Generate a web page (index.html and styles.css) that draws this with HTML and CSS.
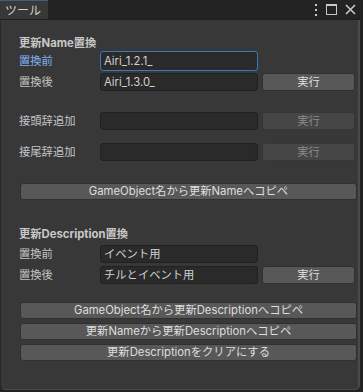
FILE: index.html
```html
<!DOCTYPE html>
<html lang="ja">
<head>
<meta charset="utf-8">
<link rel="stylesheet" href="styles.css">
</head>
<body>
<div class="window">
  <div class="tabbar">
    <div class="tab">ツール</div>
    <div class="tab-icons">
      <svg class="ic" width="4" height="12" viewBox="0 0 4 12"><rect x="1" y="0" width="2" height="2" fill="#c8c8c8"/><rect x="1" y="5" width="2" height="2" fill="#c8c8c8"/><rect x="1" y="10" width="2" height="2" fill="#c8c8c8"/></svg>
      <svg class="ic" width="11" height="11" viewBox="0 0 11 11"><rect x="0.5" y="0.5" width="10" height="10" fill="none" stroke="#c8c8c8" stroke-width="1"/><rect x="0" y="0" width="11" height="2" fill="#c8c8c8"/></svg>
      <svg class="ic" width="11" height="11" viewBox="0 0 11 11"><path d="M1 1 L10 10 M10 1 L1 10" stroke="#c8c8c8" stroke-width="1.6"/></svg>
    </div>
  </div>
  <div class="panel">
    <div class="content">
      <div class="heading">更新Name置換</div>
      <div class="row r1">
        <div class="label focus">置換前</div>
        <div class="field focused">Airi_1.2.1_</div>
      </div>
      <div class="row r2">
        <div class="label">置換後</div>
        <div class="field">Airi_1.3.0_</div>
        <div class="btn small">実行</div>
      </div>
      <div class="row r3">
        <div class="label">接頭辞追加</div>
        <div class="field"></div>
        <div class="btn small disabled">実行</div>
      </div>
      <div class="row r4">
        <div class="label">接尾辞追加</div>
        <div class="field"></div>
        <div class="btn small disabled">実行</div>
      </div>
      <div class="btn wide w1">GameObject名から更新Nameへコピペ</div>

      <div class="heading h2">更新Description置換</div>
      <div class="row r1">
        <div class="label">置換前</div>
        <div class="field">イベント用</div>
      </div>
      <div class="row r2">
        <div class="label">置換後</div>
        <div class="field">チルとイベント用</div>
        <div class="btn small">実行</div>
      </div>
      <div class="btn wide w2">GameObject名から更新Descriptionへコピペ</div>
      <div class="btn wide w3">更新Nameから更新Descriptionへコピペ</div>
      <div class="btn wide w3">更新Descriptionをクリアにする</div>
    </div>
  </div>
</div>
</body>
</html>
```
FILE: styles.css
```css
* { box-sizing: border-box; }
html, body {
  margin: 0;
  padding: 0;
  width: 363px;
  height: 392px;
  overflow: hidden;
  background: #232323;
  font-family: "Inter", "Noto Sans CJK JP", sans-serif;
  font-size: 11.3px;
  color: #c4c4c4;
}
.window {
  width: 360px;
  height: 390px;
  display: flex;
  flex-direction: column;
}
.tabbar {
  height: 20px;
  background: #232323;
  display: flex;
  align-items: stretch;
  justify-content: space-between;
  border-bottom: 1px solid #1e1e1e;
}
.tab {
  width: 48px;
  background: #383838;
  border-top: 1px solid #3f5f80;
  padding-left: 5px;
  line-height: 19px;
  color: #d0d0d0;
  font-size: 12px;
}
.tab-icons {
  display: flex;
  align-items: center;
  gap: 8px;
  padding-right: 4px;
}
.panel {
  flex: 1;
  background: #383838;
  border-right: 2px solid #4a4a4a;
  border-bottom: 1px solid #4a4a4a;
  border-left: 1px solid #2a2a2a;
  border-bottom-left-radius: 5px;
  border-bottom-right-radius: 5px;
}
.content {
  padding: 15px 2px 0 18px;
  display: flex;
  flex-direction: column;
}
.heading {
  height: 16px;
  line-height: 16px;
  font-weight: bold;
  color: #c8c8c8;
  margin-bottom: 1px;
}
.heading.h2 { margin-top: 26px; margin-bottom: 3px; }
.row {
  display: flex;
  align-items: center;
  height: 18px;
}
.row.r2 { margin-top: 3px; }
.row.r3 { margin-top: 21px; }
.row.r4 { margin-top: 13px; }
.label {
  width: 81px;
  line-height: 18px;
  color: #c4c4c4;
}
.label.focus { color: #7fb0f5; }
.field {
  width: 158px;
  height: 18px;
  background: #2a2a2a;
  border: 1px solid #212121;
  border-radius: 3px;
  padding-left: 3px;
  line-height: 16px;
  color: #d2d2d2;
}
.field.focused {
  border: 1px solid #3a79bb;
  height: 20px;
  line-height: 18px;
}
.btn {
  background: #585858;
  border: 1px solid #303030;
  border-radius: 3px;
  color: #dedede;
  text-align: center;
  line-height: 15px;
  height: 17px;
}
.btn.small {
  width: 93px;
  margin-left: 4px;
  height: 18px;
  line-height: 16px;
}
.btn.disabled {
  background: #464646;
  border-color: #363636;
  color: #8a8a8a;
}
.btn.wide {
  width: 337px;
  margin-left: 1px;
}
.btn.w1 { margin-top: 22px; }
.btn.w2 { margin-top: 18px; }
.btn.w3 { margin-top: 4px; }
.ic { display: block; }
```
